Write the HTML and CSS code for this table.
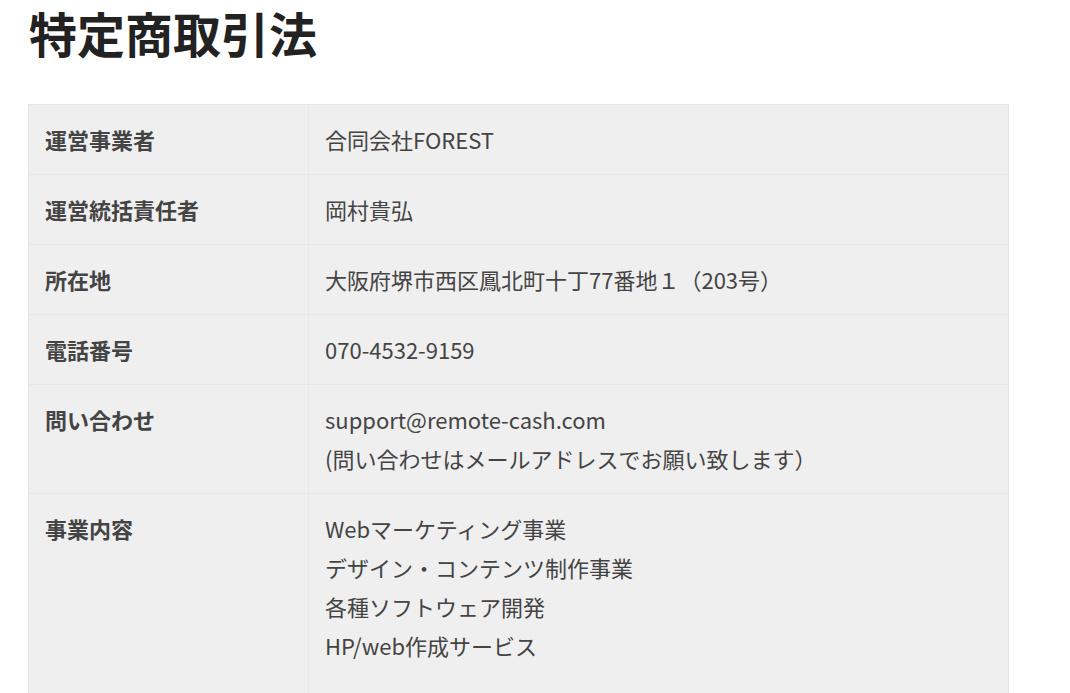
FILE: index.html
```html
<!DOCTYPE html>
<html lang="ja">
<head>
    <meta charset="UTF-8">
    <meta name="viewport" content="width=device-width, initial-scale=1.0">
    <title>特定商取引法</title>
    <link rel="stylesheet" href="styles.css">
</head>
<body>
    <main class="page">
        <h1 class="page-title">特定商取引法</h1>

        <table class="law-table">
            <tr>
                <th>運営事業者</th>
                <td>合同会社FOREST</td>
            </tr>
            <tr>
                <th>運営統括責任者</th>
                <td>岡村貴弘</td>
            </tr>
            <tr>
                <th>所在地</th>
                <td>大阪府堺市西区鳳北町十丁77番地１（203号）</td>
            </tr>
            <tr>
                <th>電話番号</th>
                <td>070-4532-9159</td>
            </tr>
            <tr>
                <th>問い合わせ</th>
                <td>support@remote-cash.com<br>(問い合わせはメールアドレスでお願い致します）</td>
            </tr>
            <tr class="last-row">
                <th>事業内容</th>
                <td>Webマーケティング事業<br>デザイン・コンテンツ制作事業<br>各種ソフトウェア開発<br>HP/web作成サービス</td>
            </tr>
        </table>
    </main>
</body>
</html>
```

FILE: styles.css
```css
* {
    margin: 0;
    padding: 0;
    box-sizing: border-box;
}

body {
    font-family: "Noto Sans CJK JP", "Noto Sans", sans-serif;
    background: #fff;
    color: #444;
}

.page {
    padding: 4px 0 0 28px;
}

.page-title {
    font-size: 48px;
    font-weight: 700;
    line-height: 1.2;
    color: #222;
    margin-bottom: 42px;
    padding-left: 1px;
}

.law-table {
    width: 981px;
    border-collapse: collapse;
    background: #efefef;
    border: 1px solid #e3e5e8;
    font-size: 22px;
    line-height: 39px;
}

.law-table th,
.law-table td {
    text-align: left;
    vertical-align: top;
    padding: 15px 16px;
    border-bottom: 1px solid #e5e7ea;
}

.law-table th {
    width: 280px;
    font-weight: 700;
    color: #444;
    border-right: 1px solid #e5e7ea;
}

.law-table td {
    font-weight: 400;
    color: #444;
}

.last-row td,
.last-row th {
    padding-bottom: 40px;
}
```
